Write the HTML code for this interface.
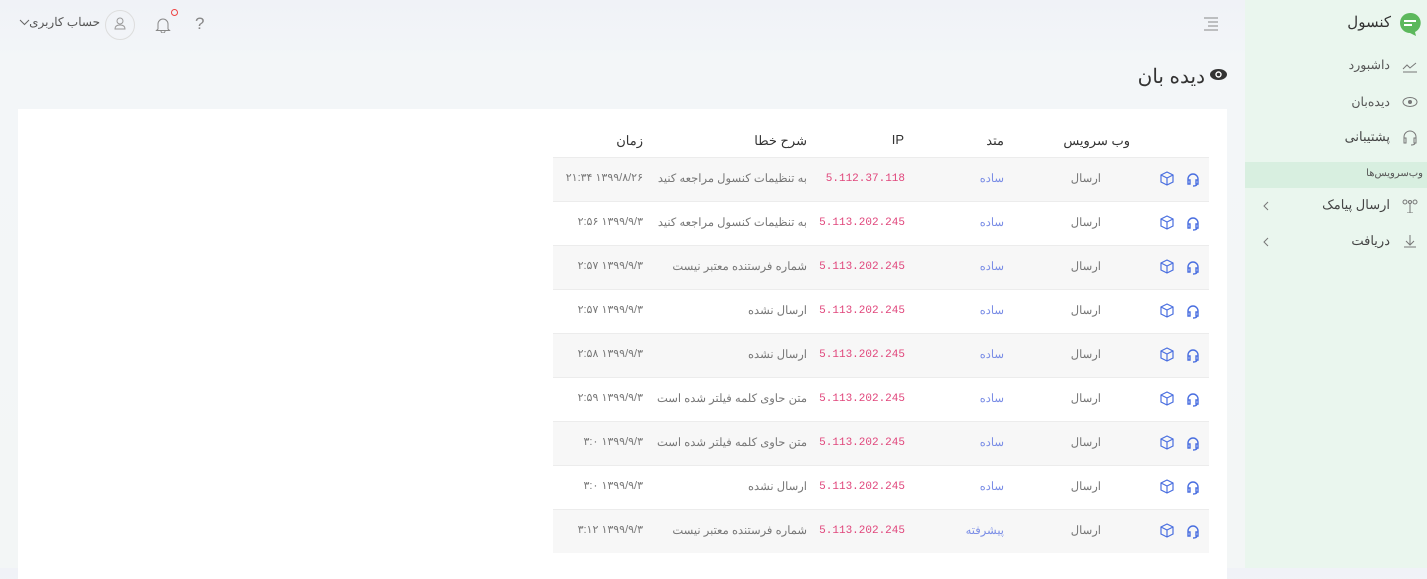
<!DOCTYPE html>
<html dir="ltr"><head><meta charset="utf-8"><style>
*{box-sizing:border-box;margin:0;padding:0}
body{width:1427px;height:568px;overflow:hidden;font-family:"Liberation Sans","Noto Sans CJK SC",sans-serif;background:linear-gradient(180deg,#f0f2f7 0,#f3f6f8 60px,#f3f6f6 100%);position:relative;color:#555}
.side{position:absolute;left:1245px;top:0;width:182px;height:568px;background:#eaf6ee}
.t{position:absolute;white-space:nowrap;direction:rtl}
.card{position:absolute;left:18px;top:109px;width:1209px;height:470px;background:#fff}
.row{position:absolute;left:553px;width:656px;height:44px;border-top:1px solid #ececec}
.row.g{background:#f7f7f7}
.c{position:absolute;top:13px;font-size:11.5px;white-space:nowrap;direction:rtl}
</style></head><body>
<div class="side">
 <div class="t" style="right:36px;top:13px;font-size:15px;color:#333">کنسول</div>
 <svg style="position:absolute;left:154px;top:12px" width="22" height="25" viewBox="0 0 22 25"><path d="M11 1a10 10 0 0 0 0 20h0l6 3-1-4A10 10 0 0 0 11 1z" fill="#5cb85c"/><rect x="5" y="8" width="12" height="2" fill="#fff"/><rect x="5" y="12" width="8" height="2" fill="#fff"/></svg>
 <div class="t" style="right:37px;top:57px;font-size:12.5px;color:#555">داشبورد</div>
 <svg style="position:absolute;left:157px;top:59px" width="16" height="14"><path d="M1 10l4-4 3 3 6-5M1 13h14" stroke="#777" fill="none"/></svg>
 <div class="t" style="right:37px;top:94px;font-size:12.5px;color:#555">دیده‌بان</div>
 <svg style="position:absolute;left:157px;top:96px" width="16" height="12"><ellipse cx="8" cy="6" rx="7" ry="4.5" stroke="#777" fill="none"/><circle cx="8" cy="6" r="2" fill="#777"/></svg>
 <div class="t" style="right:37px;top:129px;font-size:13px;color:#444">پشتیبانی</div>
 <svg style="position:absolute;left:157px;top:129px" width="16" height="17"><path d="M2 10V8a6 6 0 0 1 12 0v2M2 9h2v5H2zM12 9h2v5h-2zM13 14q0 2-4 2" stroke="#777" fill="none"/></svg>
 <div style="position:absolute;left:0;top:162px;width:182px;height:26px;background:#d8efe0"></div>
 <div class="t" style="right:4px;top:168px;font-size:10px;color:#555">وب‌سرویس‌ها</div>
 <div class="t" style="right:37px;top:197px;font-size:13px;color:#444">ارسال پیامک</div>
 <svg style="position:absolute;left:157px;top:199px" width="16" height="14"><path d="M8 4v10M5 14h6" stroke="#777" fill="none"/><circle cx="3" cy="3" r="2" stroke="#777" fill="none"/><circle cx="13" cy="3" r="2" stroke="#777" fill="none"/><circle cx="8" cy="3" r="1.5" stroke="#777" fill="none"/></svg>
 <svg style="position:absolute;left:18px;top:201px" width="6" height="10"><path d="M5 1L1 5l4 4" stroke="#777" fill="none"/></svg>
 <div class="t" style="right:37px;top:233px;font-size:13px;color:#444">دریافت</div>
 <svg style="position:absolute;left:157px;top:234px" width="16" height="14"><path d="M8 1v10M4 7l4 4 4-4M2 13h12" stroke="#777" fill="none"/></svg>
 <svg style="position:absolute;left:18px;top:237px" width="6" height="10"><path d="M5 1L1 5l4 4" stroke="#777" fill="none"/></svg>
</div>
<svg style="position:absolute;left:1203px;top:17px" width="16" height="14"><path d="M1 1h14M5 5h10M5 9h10M1 13h14" stroke="#888"/></svg>
<div class="t" style="right:1327px;top:15px;font-size:12px;color:#555">حساب کاربری</div>
<svg style="position:absolute;left:19px;top:19px" width="11" height="8"><path d="M1 1l4.5 4.5L10 1" stroke="#666" fill="none"/></svg>
<div style="position:absolute;left:105px;top:10px;width:30px;height:30px;border:1px solid #ddd;border-radius:50%"></div>
<svg style="position:absolute;left:113px;top:16px" width="14" height="15"><circle cx="7" cy="5" r="3" stroke="#999" fill="none"/><path d="M2 13q0-4 5-4t5 4z" stroke="#999" fill="none"/></svg>
<svg style="position:absolute;left:155px;top:16px" width="16" height="17"><path d="M3 13V8a5 5 0 0 1 10 0v5l1.5 1.5h-13zM6 15a2 2 0 0 0 4 0" stroke="#888" fill="none"/></svg>
<div style="position:absolute;left:171px;top:9px;width:7px;height:7px;border:1.5px solid #e44;border-radius:50%"></div>
<div class="t" style="left:195px;top:14px;font-size:17px;color:#888">?</div>
<div class="t" style="right:222px;top:64px;font-size:20px;color:#333">دیده بان</div>
<svg style="position:absolute;left:1209px;top:68px" width="19" height="13"><ellipse cx="9.5" cy="6.5" rx="8.5" ry="5.5" fill="#333"/><circle cx="9.5" cy="6.5" r="3.2" fill="#fff"/><circle cx="9.5" cy="6.5" r="1.8" fill="#333"/></svg>
<div class="card"></div>
<div class="t" style="right:297px;top:133px;font-size:13px;color:#333">وب سرویس</div>
<div class="t" style="right:423px;top:133px;font-size:13px;color:#333">متد</div>
<div class="t" style="right:523px;top:132px;font-size:13px;color:#333;direction:ltr">IP</div>
<div class="t" style="right:620px;top:133px;font-size:13px;color:#333">شرح خطا</div>
<div class="t" style="right:784px;top:133px;font-size:13px;color:#333">زمان</div>
<div id="rows"></div>
<script>
var d=[["ساده","5.112.37.118","به تنظیمات کنسول مراجعه کنید","۱۳۹۹/۸/۲۶ ۲۱:۳۴"],
["ساده","5.113.202.245","به تنظیمات کنسول مراجعه کنید","۱۳۹۹/۹/۳ ۲:۵۶"],
["ساده","5.113.202.245","شماره فرستنده معتبر نیست","۱۳۹۹/۹/۳ ۲:۵۷"],
["ساده","5.113.202.245","ارسال نشده","۱۳۹۹/۹/۳ ۲:۵۷"],
["ساده","5.113.202.245","ارسال نشده","۱۳۹۹/۹/۳ ۲:۵۸"],
["ساده","5.113.202.245","متن حاوی کلمه فیلتر شده است","۱۳۹۹/۹/۳ ۲:۵۹"],
["ساده","5.113.202.245","متن حاوی کلمه فیلتر شده است","۱۳۹۹/۹/۳ ۳:۰"],
["ساده","5.113.202.245","ارسال نشده","۱۳۹۹/۹/۳ ۳:۰"],
["پیشرفته","5.113.202.245","شماره فرستنده معتبر نیست","۱۳۹۹/۹/۳ ۳:۱۲"]];
var h="";d.forEach(function(r,i){h+='<div class="row'+(i%2==0?' g':'')+'" style="top:'+(157+i*44)+'px">'+
'<svg style="position:absolute;left:633px;top:14px" width="14" height="15"><path d="M2 9V7a5 5 0 0 1 10 0v2M2 8h2v4H2zM10 8h2v4h-2zM11 12q0 2-4 2" stroke="#4a6fe0" stroke-width="1.4" fill="none"/></svg>'+
'<svg style="position:absolute;left:607px;top:13px" width="14" height="15"><path d="M7 1l6 3v7l-6 3-6-3V4zM1 4l6 3 6-3M7 7v7" stroke="#4a6fe0" stroke-width="1.2" fill="none"/></svg>'+
'<div class="c" style="right:108px;color:#777">ارسال</div>'+
'<div class="c" style="right:205px;color:#7b8ee6">'+r[0]+'</div>'+
'<div class="c" style="right:304px;top:15px;color:#e0457b;direction:ltr;font-family:Liberation Mono,monospace;font-size:11px">'+r[1]+'</div>'+
'<div class="c" style="right:402px;color:#777">'+r[2]+'</div>'+
'<div class="c" style="right:566px;color:#777;font-size:11px">'+r[3]+'</div></div>'});
document.getElementById("rows").innerHTML=h;
</script>
</body></html>
